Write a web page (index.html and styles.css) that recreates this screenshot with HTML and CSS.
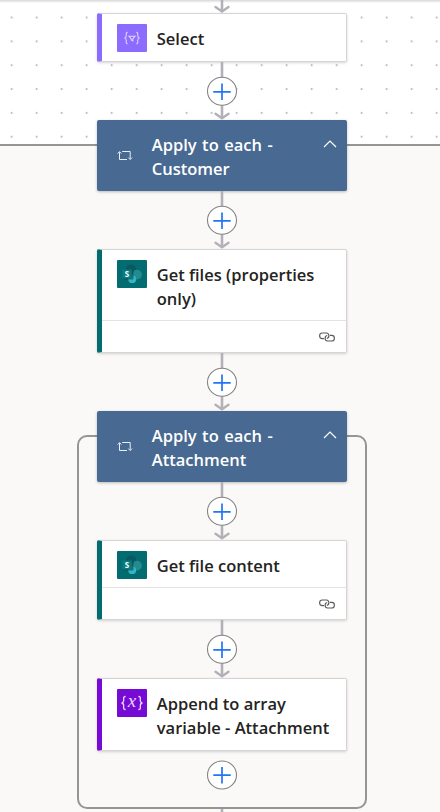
FILE: index.html
```html
<!DOCTYPE html>
<html lang="en">
<head>
<meta charset="utf-8">
<title>Flow designer</title>
<link rel="stylesheet" href="styles.css">
</head>
<body>
<svg class="defs" width="0" height="0" aria-hidden="true">
  <defs>
    <symbol id="connector" viewBox="0 0 34 58">
      <path class="edge" d="M17 0V55"/>
      <path class="arrow" d="M10.5 51.7L17 56.2L23.5 51.7"/>
      <ellipse class="ring" cx="17" cy="29.3" rx="14.5" ry="14"/>
      <path class="plus" d="M8.3 29.8H25.7M17 21.5V38.1"/>
    </symbol>
    <symbol id="loop" viewBox="0 0 16 12">
      <path d="M2.5 2.2V9.5H10M0.7 3.6L2.5 1.6L4.3 3.6M5.2 1.5H13.2V8.8M11.4 7.6L13.2 9.6L15 7.6" fill="none" stroke="#e8eef5" stroke-width="1"/>
    </symbol>
    <symbol id="chevron" viewBox="0 0 14 8">
      <path d="M1 7L7 1L13 7" fill="none" stroke="#fff" stroke-width="1.2"/>
    </symbol>
    <symbol id="link" viewBox="0 0 16 10">
      <path d="M5 6.6H3.4A2.8 2.8 0 0 1 3.4 1H7.4A2.8 2.8 0 0 1 7.8 6.5M11 3.4H12.6A2.8 2.8 0 0 1 12.6 9H8.6A2.8 2.8 0 0 1 8.2 3.5" fill="none" stroke="#5c5a58" stroke-width="1.15"/>
    </symbol>
    <symbol id="sharepoint" viewBox="0 0 30 28">
      <rect width="30" height="28" rx="1" fill="#036c70"/>
      <circle cx="14.2" cy="9.8" r="5.3" fill="#0a5960"/>
      <circle cx="20" cy="14.6" r="4.9" fill="#218b91"/>
      <circle cx="15.2" cy="19.2" r="3.9" fill="#34b5c3"/>
      <rect x="6" y="10.2" width="10.5" height="9.2" rx=".8" fill="#044b50" opacity=".65"/>
      <rect x="5.3" y="9.4" width="9.6" height="9.2" rx=".8" fill="#087a80"/>
      <text x="10" y="17" class="sp-letter">S</text>
    </symbol>
  </defs>
</svg>
<main class="canvas">
  <svg class="incoming" viewBox="0 0 34 13"><path class="edge" d="M17 0V10"/><path class="arrow" d="M10.5 6.9L17 11.5L23.5 6.9"/></svg>

  <article class="card select">
    <div class="card-main">
      <svg class="badge" viewBox="0 0 30 28"><rect width="30" height="28" rx="1" fill="#8c6cff"/><path d="M10.8 8.2C8.8 8.2 9.3 9.7 9.3 11.4C9.3 13 8.6 13.8 7.4 14C8.6 14.2 9.3 15 9.3 16.6C9.3 18.3 8.8 19.8 10.8 19.8M19.2 8.2C21.2 8.2 20.7 9.7 20.7 11.4C20.7 13 21.4 13.8 22.6 14C21.4 14.2 20.7 15 20.7 16.6C20.7 18.3 21.2 19.8 19.2 19.8M12 12.2H18L15.8 15V16.8L14.2 16V15Z" fill="none" stroke="#ddd3ff" stroke-width="1.1"/></svg>
      <h2>Select</h2>
    </div>
  </article>
  <svg class="connector"><use href="#connector"/></svg>

  <section class="scope outer">
    <header class="loop-head">
      <svg class="loop-icon"><use href="#loop"/></svg>
      <h2>Apply to each -<br>Customer</h2>
      <svg class="chevron"><use href="#chevron"/></svg>
    </header>
    <svg class="connector"><use href="#connector"/></svg>

    <article class="card files">
      <div class="card-main">
        <svg class="badge"><use href="#sharepoint"/></svg>
        <h2>Get files (properties<br>only)</h2>
      </div>
      <footer><svg class="link"><use href="#link"/></svg></footer>
    </article>
    <svg class="connector"><use href="#connector"/></svg>

    <section class="scope inner">
      <header class="loop-head">
        <svg class="loop-icon"><use href="#loop"/></svg>
        <h2>Apply to each -<br>Attachment</h2>
        <svg class="chevron"><use href="#chevron"/></svg>
      </header>
      <svg class="connector"><use href="#connector"/></svg>

      <article class="card content">
        <div class="card-main">
          <svg class="badge"><use href="#sharepoint"/></svg>
          <h2>Get file content</h2>
        </div>
        <footer><svg class="link"><use href="#link"/></svg></footer>
      </article>
      <svg class="connector"><use href="#connector"/></svg>

      <article class="card append">
        <div class="card-main">
          <svg class="badge" viewBox="0 0 30 28"><rect width="30" height="28" rx="1" fill="#770bd6"/><path d="M8.6 7.5C6 7.5 6.7 9.4 6.7 11.3C6.7 13 6 13.8 4.6 14C6 14.2 6.7 15 6.7 16.7C6.7 18.6 6 20.5 8.6 20.5M21.4 7.5C24 7.5 23.3 9.4 23.3 11.3C23.3 13 24 13.8 25.4 14C24 14.2 23.3 15 23.3 16.7C23.3 18.6 24 20.5 21.4 20.5" fill="none" stroke="#ead5fa" stroke-width="1.3"/><text class="var-letter" x="15" y="17.5">x</text></svg>
          <h2>Append to array<br>variable - Attachment</h2>
        </div>
      </article>
      <svg class="add" viewBox="0 0 34 30"><ellipse class="ring" cx="17" cy="15" rx="14.5" ry="14"/><path class="plus" d="M8.3 15.2H25.7M17 6.9V23.5"/></svg>
    </section>
    <svg class="outgoing" viewBox="0 0 34 4"><path class="edge" d="M17 0V4"/></svg>
  </section>
</main>
</body>
</html>
```
FILE: styles.css
```css
* { box-sizing: border-box; }
body {
  margin: 0;
  font-family: "Open Sans", "Noto Sans", sans-serif;
  color: #242321;
}
.defs { display: none; }
svg { display: block; flex: none; }
.canvas {
  width: 440px;
  height: 812px;
  overflow: hidden;
  padding-left: 3.5px;
  display: flex;
  flex-direction: column;
  align-items: center;
  background-color: #fff;
  background-image: linear-gradient(#d6d6d6, #f2f2f2 2px, transparent 3px), radial-gradient(circle, #b2b2b2 .6px, transparent 1.3px);
  background-size: 100% 3px, 25px 23.85px;
  background-position: 0 0, -.8px 5.6px;
  background-repeat: no-repeat, repeat;
}
.edge { fill: none; stroke: #b3b0b8; stroke-width: 2.6; }
.arrow { fill: none; stroke: #b3b0b8; stroke-width: 2.4; stroke-linecap: round; stroke-linejoin: round; }
.ring { fill: #fff; stroke: #838383; stroke-width: 1.1; }
.plus { fill: none; stroke: #2474f5; stroke-width: 1.7; }
.incoming { width: 34px; height: 13px; }
.connector { width: 34px; height: 58px; }
.add { width: 34px; height: 30px; margin-top: 9px; }
.outgoing { width: 34px; height: 4px; }
.sp-letter { fill: #fff; font: 700 8px "Open Sans", sans-serif; text-anchor: middle; }
.var-letter { fill: #ead5fa; font: italic 19px "Liberation Serif", serif; text-anchor: middle; }
h2 {
  margin: 0;
  font-size: 16.5px;
  font-weight: 600;
  line-height: 24px;
  white-space: nowrap;
}
.card {
  flex: none;
  width: 250px;
  background: #fff;
  border: 1px solid #d5d5d6;
  border-left: 5px solid #036c70;
  border-radius: 2px;
  box-shadow: 0 1px 3px rgba(0, 0, 0, .16);
  display: flex;
  flex-direction: column;
}
.card-main {
  display: flex;
  flex: 1;
  align-items: flex-start;
  gap: 10px;
  padding: 10px 0 0 15px;
}
.card-main h2 { padding-top: 3px; }
.badge { width: 30px; height: 28px; }
.card footer {
  height: 32px;
  border-top: 1px solid #e3e3e3;
  display: flex;
  justify-content: flex-end;
  align-items: center;
  padding-right: 11px;
}
.link { width: 16px; height: 10px; }
.select { height: 49px; border-left-color: #8c6cff; }
.select h2 { padding-top: 3.4px; }
.files { height: 104px; }
.content { height: 80px; }
.append { height: 73px; border-left-color: #770bd6; }
.scope {
  display: flex;
  flex-direction: column;
  align-items: center;
  background: #faf9f8;
}
.outer {
  width: 446px;
  margin: 24px 0 0 -3.5px;
  padding-left: 3.5px;
  border-top: 2px solid #979593;
  flex: 1 0 auto;
}
.inner {
  width: 290px;
  height: 374px;
  flex: none;
  margin-top: 24px;
  border: 2px solid #979593;
  border-radius: 10px;
}
.loop-head {
  width: 250px;
  height: 71px;
  flex: none;
  margin-top: -26px;
  display: flex;
  align-items: center;
  padding: 0 10px 0 20px;
  background: #486991;
  color: #fff;
  border-radius: 2px;
  box-shadow: 0 1px 3px rgba(0, 0, 0, .25);
}
.loop-head h2 { flex: 1; padding-top: 2px; word-spacing: 1.2px; }
.loop-icon { width: 16px; height: 12px; margin: 1px 19px 0 0; }
.chevron { width: 14px; height: 8px; margin-bottom: 23px; }
```
